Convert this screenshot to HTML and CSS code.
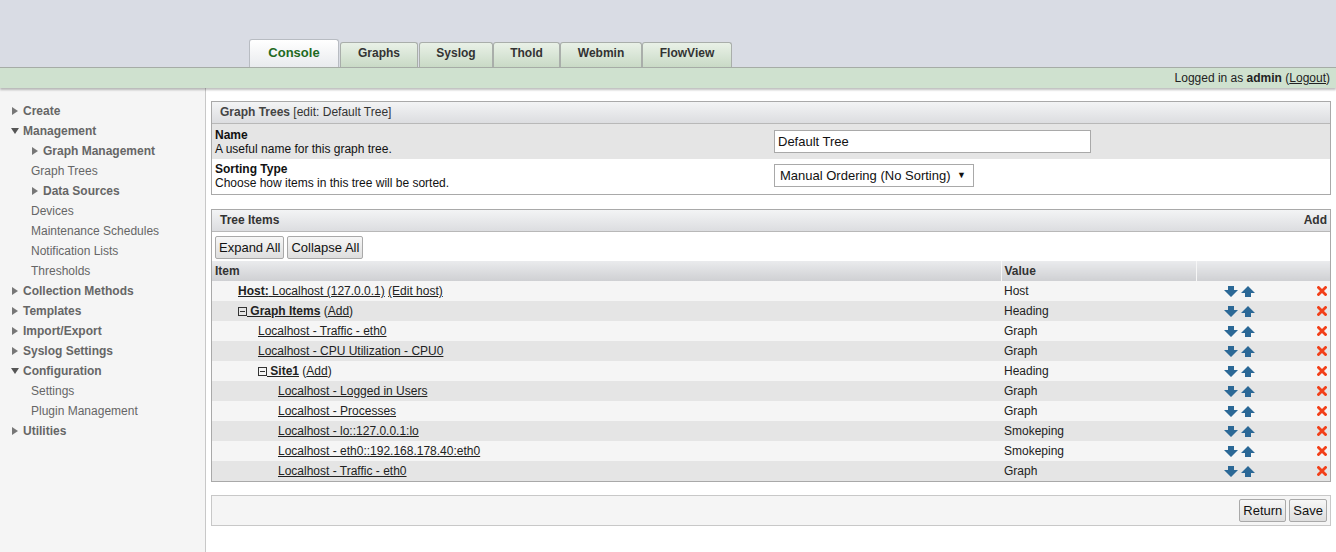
FILE: index.html
```html
<!DOCTYPE html>
<html>
<head>
<meta charset="utf-8">
<link rel="stylesheet" href="styles.css">
</head>
<body>
<div class="page">
  <header class="top">
    <nav class="tabs">
      <a class="tab active">Console</a>
      <a class="tab w-graphs">Graphs</a>
      <a class="tab w-syslog">Syslog</a>
      <a class="tab w-thold">Thold</a>
      <a class="tab w-webmin">Webmin</a>
      <a class="tab w-flow">FlowView</a>
    </nav>
  </header>
  <div class="userbar">Logged in as <b>admin</b> (<u>Logout</u>)</div>
  <div class="body">
    <aside class="side">
      <ul class="menu">
        <li class="top-item"><span class="tri r"></span>Create</li>
        <li class="top-item"><span class="tri d"></span>Management</li>
        <li class="sub-item bold"><span class="tri r"></span>Graph Management</li>
        <li class="sub-item">Graph Trees</li>
        <li class="sub-item bold"><span class="tri r"></span>Data Sources</li>
        <li class="sub-item">Devices</li>
        <li class="sub-item">Maintenance Schedules</li>
        <li class="sub-item">Notification Lists</li>
        <li class="sub-item">Thresholds</li>
        <li class="top-item"><span class="tri r"></span>Collection Methods</li>
        <li class="top-item"><span class="tri r"></span>Templates</li>
        <li class="top-item"><span class="tri r"></span>Import/Export</li>
        <li class="top-item"><span class="tri r"></span>Syslog Settings</li>
        <li class="top-item"><span class="tri d"></span>Configuration</li>
        <li class="sub-item">Settings</li>
        <li class="sub-item">Plugin Management</li>
        <li class="top-item"><span class="tri r"></span>Utilities</li>
      </ul>
    </aside>
    <main class="main">
      <section class="panel">
        <div class="panel-head"><span class="semi">Graph Trees</span> [edit: Default Tree]</div>
        <div class="form-row odd">
          <div class="form-label"><b>Name</b><br>A useful name for this graph tree.</div>
          <div class="form-field"><input class="text-in" type="text" value="Default Tree"></div>
        </div>
        <div class="form-row">
          <div class="form-label"><b>Sorting Type</b><br>Choose how items in this tree will be sorted.</div>
          <div class="form-field"><div class="select">Manual Ordering (No Sorting)<span class="caret">▼</span></div></div>
        </div>
      </section>

      <section class="panel panel2">
        <div class="panel-head bold split"><span>Tree Items</span><span>Add</span></div>
        <div class="btn-row"><button class="btn">Expand All</button><button class="btn">Collapse All</button></div>
        <table class="tree">
          <colgroup><col class="c-item"><col class="c-val"><col class="c-act"></colgroup>
          <thead>
            <tr><th>Item</th><th class="div">Value</th><th class="div"></th></tr>
          </thead>
          <tbody>
            <tr class="r1"><td><span class="lv l1"><u><b>Host:</b> Localhost (127.0.0.1)</u> <u>(Edit host)</u></span></td><td>Host</td><td class="act"></td></tr>
            <tr class="r2"><td><span class="lv l1"><span class="box"></span><u><b>&nbsp;Graph Items</b></u> (<u>Add</u>)</span></td><td>Heading</td><td class="act"></td></tr>
            <tr class="r1"><td><span class="lv l2"><u>Localhost - Traffic - eth0</u></span></td><td>Graph</td><td class="act"></td></tr>
            <tr class="r2"><td><span class="lv l2"><u>Localhost - CPU Utilization - CPU0</u></span></td><td>Graph</td><td class="act"></td></tr>
            <tr class="r1"><td><span class="lv l2"><span class="box"></span><u><b>&nbsp;Site1</b></u> (<u>Add</u>)</span></td><td>Heading</td><td class="act"></td></tr>
            <tr class="r2"><td><span class="lv l3"><u>Localhost - Logged in Users</u></span></td><td>Graph</td><td class="act"></td></tr>
            <tr class="r1"><td><span class="lv l3"><u>Localhost - Processes</u></span></td><td>Graph</td><td class="act"></td></tr>
            <tr class="r2"><td><span class="lv l3"><u>Localhost - lo::127.0.0.1:lo</u></span></td><td>Smokeping</td><td class="act"></td></tr>
            <tr class="r1"><td><span class="lv l3"><u>Localhost - eth0::192.168.178.40:eth0</u></span></td><td>Smokeping</td><td class="act"></td></tr>
            <tr class="r2"><td><span class="lv l3"><u>Localhost - Traffic - eth0</u></span></td><td>Graph</td><td class="act"></td></tr>
          </tbody>
        </table>
      </section>

      <section class="save-bar">
        <button class="btn">Return</button><button class="btn">Save</button>
      </section>
    </main>
  </div>
</div>
<script>
  var html = '<span class="acts"><svg class="arr" width="14" height="11" viewBox="0 0 14 11"><path d="M4 0h6v4h4l-7 7-7-7h4z"/></svg><svg class="arr" width="14" height="11" viewBox="0 0 14 11"><path d="M4 11h6v-4h4l-7-7-7 7h4z"/></svg></span><svg class="del" width="10" height="10" viewBox="0 0 10 10"><path d="M1.5 1.5l7 7M8.5 1.5l-7 7"/></svg>';
  document.querySelectorAll('td.act').forEach(function (td) { td.innerHTML = '<div class="actwrap">' + html + '</div>'; });
</script>
</body>
</html>
```

FILE: styles.css
```css
* { box-sizing: border-box; }
html, body { margin: 0; padding: 0; }
body {
  font-family: "Liberation Sans", Arial, sans-serif;
  font-size: 12px;
  color: #222;
  background: #fff;
}
.page { width: 1336px; height: 552px; overflow: hidden; display: flex; flex-direction: column; }

.top {
  height: 67px;
  background: #d9dce4;
  display: flex;
  align-items: flex-end;
  padding-left: 249px;
}
.tabs { display: flex; align-items: flex-end; }
.tab {
  height: 25px;
  line-height: 20px;
  text-align: center;
  font-weight: bold;
  font-size: 12px;
  color: #333;
  border: 1px solid #a9aeaa;
  border-bottom: none;
  border-radius: 3px 3px 0 0;
  background: linear-gradient(#e9f1e7, #c9dac6);
}
.tab.active {
  width: 90px;
  height: 28px;
  line-height: 25px;
  font-size: 13px;
  color: #1f6a1f;
  background: linear-gradient(#ffffff, #e9ebee);
  border-color: #b8bcc2;
}
.w-graphs { width: 78px; margin-left: 1px; }
.w-syslog { width: 74px; margin-left: 1px; }
.w-thold { width: 67px; }
.w-webmin { width: 82px; }
.w-flow { width: 90px; }

.userbar {
  height: 21px;
  background: #cfe1cf;
  border-top: 1px solid #a6aca6;
  text-align: right;
  padding-right: 6px;
  line-height: 20px;
  font-size: 12px;
  color: #222;
  box-shadow: 0 2px 2px rgba(0,0,0,0.25);
  position: relative;
  z-index: 1;
}

.body { flex: 1; display: flex; min-height: 0; }
.side {
  width: 206px;
  background: #f5f5f5;
  border-right: 1px solid #c8c8c8;
  padding-top: 13px;
}
.menu { list-style: none; margin: 0; padding: 0; }
.menu li {
  height: 20px;
  line-height: 20px;
  color: #666;
  font-size: 12px;
  display: flex;
  align-items: center;
}
.top-item { padding-left: 12px; font-weight: bold; }
.sub-item { padding-left: 31px; }
.sub-item.bold { font-weight: bold; padding-left: 32px; }
.tri { display: inline-block; width: 0; height: 0; margin-right: 5px; }
.tri.r { border-top: 4px solid transparent; border-bottom: 4px solid transparent; border-left: 6px solid #777; }
.tri.d { border-left: 4px solid transparent; border-right: 4px solid transparent; border-top: 6px solid #555; margin-left: -1px; margin-right: 4px; }

.main { flex: 1; padding: 13px 5px 0 5px; display: flex; flex-direction: column; }
.panel { border: 1px solid #a9a9a9; }
.panel2 { margin-top: 14px; }
.panel-head {
  height: 22px;
  line-height: 21px;
  padding: 0 8px;
  background: linear-gradient(#f3f4f5, #dcdde0);
  border-bottom: 1px solid #b8b8b8;
  color: #333;
}
.semi { font-weight: bold; color: #444; }
.bold { font-weight: bold; }
.split { display: flex; justify-content: space-between; padding-right: 3px; }

.form-row { display: flex; height: 35px; }
.form-row.odd { background: #e5e5e5; }
.form-label { width: 559px; padding: 4px 3px 0 3px; line-height: 14px; color: #111; }
.form-field { flex: 1; padding: 6px 3px 0 3px; }
.form-row:not(.odd) .form-field { padding-top: 5px; }
.form-row:not(.odd) .form-label { padding-top: 3px; }
.text-in {
  width: 317px;
  height: 23px;
  border: 1px solid #a9a9a9;
  font-family: "Liberation Sans", Arial, sans-serif;
  font-size: 13px;
  padding: 0 3px;
  color: #111;
  margin: 0;
}
.select {
  width: 200px;
  height: 23px;
  border: 1px solid #a9a9a9;
  background: #fff;
  line-height: 21px;
  padding-left: 5px;
  font-size: 13px;
  color: #111;
  display: flex;
  justify-content: space-between;
}
.caret { font-size: 9px; padding-right: 7px; }

.btn-row { height: 29px; background: #fff; padding: 4px 3px 0 3px; display: flex; gap: 3px; }
.btn {
  height: 23px;
  border: 1px solid #a9a9a9;
  border-radius: 2px;
  background: linear-gradient(#f7f7f7, #dedede);
  font-family: "Liberation Sans", Arial, sans-serif;
  font-size: 13px;
  color: #111;
  padding: 0 3px;
  margin: 0;
}

.tree { width: 100%; border-collapse: collapse; table-layout: fixed; }
.c-item { width: 789px; }
.c-val { width: 195px; }
.tree th {
  height: 20px;
  text-align: left;
  font-weight: bold;
  color: #333;
  padding: 0 3px;
  background: linear-gradient(#eaebed, #cfd0d3);
}
.tree th.div { border-left: 1px solid #f6f6f6; }
.tree td { height: 20px; padding: 0 3px; color: #222; white-space: nowrap; }
.r1 { background: #f5f5f5; }
.r2 { background: #e5e5e5; }
.lv { display: inline-block; }
.l1 { padding-left: 23px; }
.l2 { padding-left: 43px; }
.l3 { padding-left: 63px; }
.box {
  display: inline-block;
  width: 9px;
  height: 9px;
  border: 1px solid #333;
  position: relative;
  vertical-align: -1px;
}
.box::after {
  content: "";
  position: absolute;
  left: 1px; right: 1px; top: 3px;
  height: 1px;
  background: #333;
}
.actwrap { display: flex; align-items: center; padding-left: 25px; padding-right: 0; }
.acts { display: flex; gap: 3px; }
.arr path { fill: #2b6896; }
.del { margin-left: auto; }
.del path { stroke: #f2401a; stroke-width: 2.8; stroke-linecap: square; }

.save-bar {
  margin-top: 13px;
  height: 31px;
  border: 1px solid #c8c8c8;
  background: #f5f5f5;
  display: flex;
  justify-content: flex-end;
  align-items: center;
  gap: 3px;
  padding-right: 3px;
}
```
